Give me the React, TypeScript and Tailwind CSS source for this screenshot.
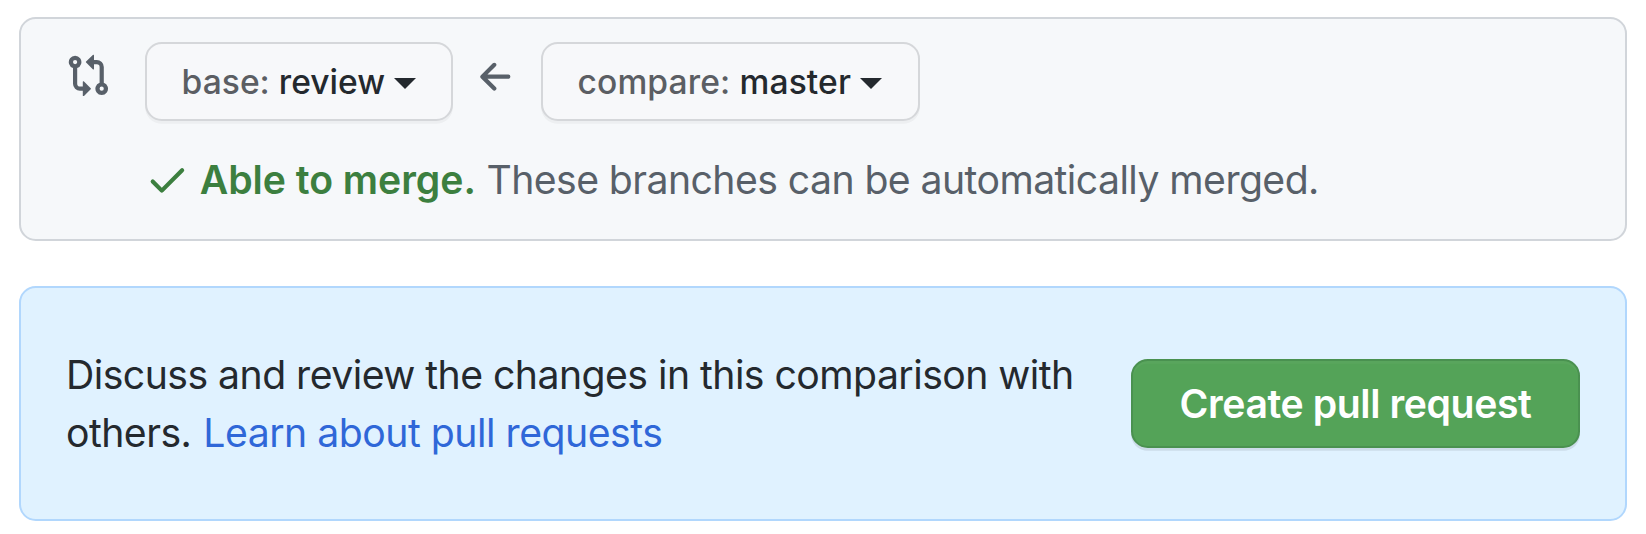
import type { ReactNode } from "react";

function Octicon({ d, className }: { d: string; className?: string }) {
  return (
    <svg viewBox="0 0 16 16" fill="currentColor" aria-hidden="true" className={`size-[44.8px] shrink-0 ${className ?? ""}`}>
      <path fillRule="evenodd" d={d} />
    </svg>
  );
}

const GIT_COMPARE =
  "M9.573.677A.25.25 0 0 1 10 .854V2.5h1A2.5 2.5 0 0 1 13.5 5v5.628a2.251 2.251 0 1 1-1.5 0V5a1 1 0 0 0-1-1h-1v1.646a.25.25 0 0 1-.427.177L7.177 3.427a.25.25 0 0 1 0-.354L9.573.677ZM6 12v-1.646a.25.25 0 0 1 .427-.177l2.396 2.396a.25.25 0 0 1 0 .354l-2.396 2.396A.25.25 0 0 1 6 15.146V13.5H5A2.5 2.5 0 0 1 2.5 11V5.372a2.25 2.25 0 1 1 1.5 0V11a1 1 0 0 0 1 1h1ZM4 3.25a.75.75 0 1 0-1.5 0 .75.75 0 0 0 1.5 0ZM12.75 12a.75.75 0 1 0 0 1.5.75.75 0 0 0 0-1.5Z";
const ARROW_LEFT =
  "M7.78 12.53a.75.75 0 0 1-1.06 0L2.47 8.28a.75.75 0 0 1 0-1.06l4.25-4.25a.751.751 0 0 1 1.042.018.751.751 0 0 1 .018 1.042L4.81 7h7.44a.75.75 0 0 1 0 1.5H4.81l2.97 2.97a.75.75 0 0 1 0 1.06Z";
const CHECK =
  "M13.78 4.22a.75.75 0 0 1 0 1.06l-7.25 7.25a.75.75 0 0 1-1.06 0L2.22 9.28a.751.751 0 0 1 .018-1.042.751.751 0 0 1 1.042-.018L6 10.94l6.72-6.72a.75.75 0 0 1 1.06 0Z";

function BranchButton({ label, className, children }: { label: string; className: string; children: ReactNode }) {
  return (
    <button
      type="button"
      className={`flex h-[79px] items-center rounded-[16.8px] border-2 border-[#d5d7da] bg-[#f7f8fa] text-[33.6px] leading-none font-medium whitespace-nowrap text-[#24292e] shadow-[0_2.8px_0_rgba(27,31,35,0.04)] ${className}`}
    >
      <span className="whitespace-pre">
        <span className="text-[#5b5e63]">{label} </span>
        {children}
      </span>
      <span className="mt-[3px] ml-[9px] h-0 w-0 border-x-[11px] border-t-[11px] border-x-transparent border-t-[#24292e]" />
    </button>
  );
}

export default function App() {
  return (
    <main className="flex h-[534px] flex-col gap-[45px] bg-white pt-[17px] pr-[19px] pl-[19px] font-['Inter',sans-serif]">
      <section className="h-[224px] shrink-0 rounded-[16.8px] border-2 border-[#d1d5da] bg-[#f6f8fa] pt-[23px] pl-[45px] text-[#586069]">
        <div className="flex items-start">
          <Octicon d={GIT_COMPARE} className="mt-[11.4px] mr-[34.2px]" />
          <BranchButton label="base:" className="w-[308px] pl-[34.6px] tracking-[0.02px]">
            review
          </BranchButton>
          <Octicon d={ARROW_LEFT} className="mt-[13px] mr-[21.7px] ml-[21.5px]" />
          <BranchButton label="compare:" className="w-[379px] pl-[34.5px] tracking-[0.13px]">
            master
          </BranchButton>
        </div>
        <div className="mt-[29px] flex h-[59px] items-center pl-[79.4px] text-[39.2px] leading-[59px] whitespace-pre">
          <Octicon d={CHECK} className="mr-[9.5px] text-[#3c7f3f]" />
          <strong className="font-semibold tracking-[-0.04px] text-[#3c7f3f]">Able to merge.</strong>
          <span className="ml-[10.5px] tracking-[-0.57px]">These branches can be automatically merged.</span>
        </div>
      </section>

      <section className="flex h-[235px] shrink-0 items-center justify-between rounded-[16.8px] border-2 border-[#b1d7fd] bg-[#e0f2ff] pr-[45px] pl-[45px]">
        <p className="text-[39.2px] leading-[58px] tracking-[-0.54px] whitespace-nowrap text-[#24292e]">
          Discuss and review the changes in this comparison with
          <br />
          others.{" "}
          <a href="#" className="ml-[1.5px] tracking-[-0.49px] text-[#2f67d8]">
            Learn about pull requests
          </a>
        </p>
        <button
          type="button"
          className="h-[89px] w-[449px] rounded-[16.8px] border-2 border-[#4a9150] bg-[#54a358] text-[39.2px] leading-none font-semibold tracking-[-0.42px] whitespace-nowrap text-white shadow-[0_2.8px_0_rgba(27,31,35,0.1),inset_0_2.8px_0_rgba(255,255,255,0.03)]"
        >
          Create pull request
        </button>
      </section>
    </main>
  );
}
